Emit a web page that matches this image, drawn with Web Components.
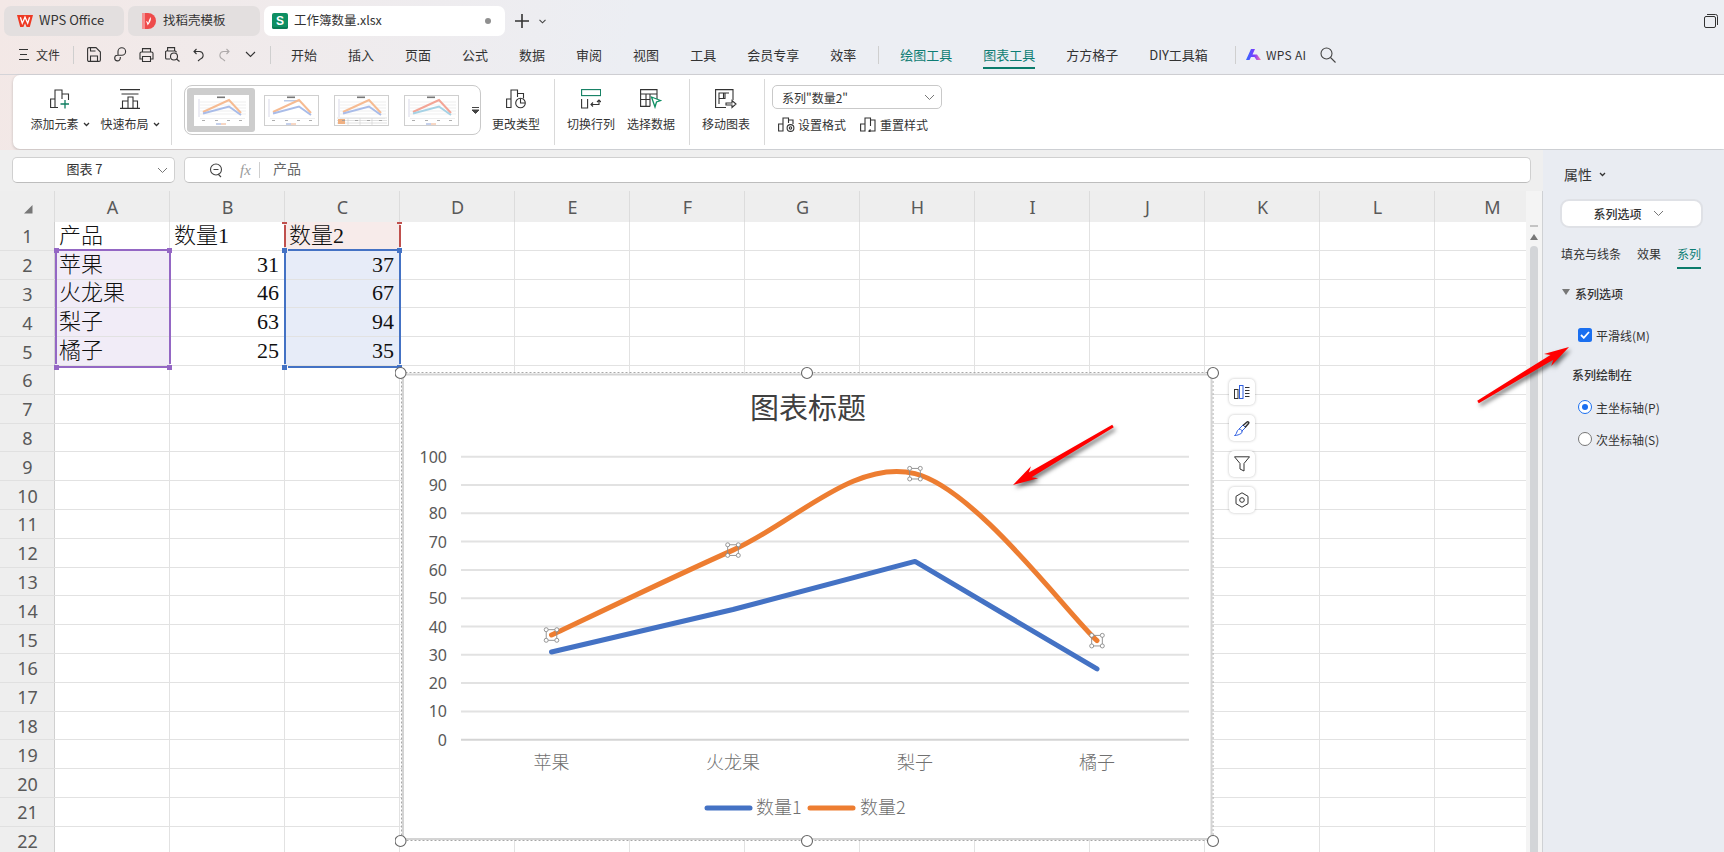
<!DOCTYPE html>
<html lang="zh">
<head>
<meta charset="utf-8">
<title>工作簿数量.xlsx</title>
<style>
html, body { margin: 0; padding: 0; }
body {
    width: 1724px; height: 852px; overflow: hidden; position: relative;
    font-family: "Noto Sans CJK SC", "Noto Sans", sans-serif; color: #333;
    background: linear-gradient(100deg, #f3e8e6 0, #eceef3 34%);
}
#main { display: flex; height: 702px; }
#left { width: 1543px; display: flex; flex-direction: column; background: #efefef; }
svg { display: block; }
</style>
</head>
<body>
<title-bar></title-bar>
<menu-bar></menu-bar>
<chart-ribbon></chart-ribbon>
<div id="main">
    <div id="left">
        <formula-bar></formula-bar>
        <sheet-view>
            <chart-box></chart-box>
        </sheet-view>
    </div>
    <props-panel></props-panel>
</div>
<red-arrow x1="1113" y1="426" x2="1013" y2="485"></red-arrow>
<red-arrow x1="1478" y1="402" x2="1569" y2="347"></red-arrow>

<script>
const open = (el, html) => { el.attachShadow({ mode: "open" }).innerHTML = html; };

const ICON = (w, h, body) => `<svg width="${w}" height="${h}" viewBox="0 0 ${w} ${h}" fill="none" stroke="#333" stroke-width="1.1">${body}</svg>`;
const CARET = `<svg width="7" height="5" viewBox="0 0 7 5" fill="none" stroke="#333" stroke-width="1.3"><path d="M1 1l2.5 2.5L6 1"/></svg>`;
const CHEV = `<svg width="11" height="7" viewBox="0 0 11 7" fill="none" stroke="#777" stroke-width="1"><path d="M1 1l4.5 4.5L10 1"/></svg>`;

class TitleBar extends HTMLElement {
    connectedCallback() {
        open(this, `
        <style>
            :host { display: flex; align-items: center; height: 40px; box-sizing: border-box; padding: 6px 0 4px 4px; gap: 4px; font-size: 13px; }
            .tab { height: 30px; border-radius: 7px; background: #e3dfdf; display: flex; align-items: center; box-sizing: border-box; }
            .tab span { margin-top: -4px; }
            .t1 { width: 120px; padding-left: 13px; gap: 6px; }
            .t2 { width: 132px; padding-left: 14px; gap: 7px; font-size: 12.5px; }
            .t3 { width: 241px; padding-left: 8px; gap: 6px; background: #fff; position: relative; font-size: 12.5px; }
            .dot { position: absolute; left: 221px; top: 12px; width: 6px; height: 6px; border-radius: 50%; background: #8f8f8f; }
            .s { width: 16px; height: 16px; border-radius: 2px; background: #0e8f63; color: #fff; font: 700 12px/16px "Liberation Sans", sans-serif; text-align: center; box-shadow: inset 0 -2px #0a7a54; }
            .plus { margin-left: 6px; }
            .more { margin-left: 6px; }
            .win { margin-left: auto; margin-right: 6px; }
        </style>
        <div class="tab t1">
            <svg width="16" height="12" viewBox="0 0 16 12"><path fill="#ee3a24" d="M0 0h16l-3.200 12H9.600L8 8.200 6.400 12H3.200z"/><path fill="none" stroke="#fff" stroke-width="1.300" d="M3.400 2.200l1.900 6 2.700-6 2.700 6 1.900-6"/></svg>
            <span>WPS Office</span>
        </div>
        <div class="tab t2">
            <svg width="14" height="16" viewBox="0 0 14 16"><path fill="#ee4b4b" d="M0 0h6a8 8 0 0 1 0 16H0z"/><path fill="#f58f8f" d="M0 0h3v16H0z"/><path fill="#fff" d="M8.500 4c.8 2 .3 5-3 8.500 0-2-1.300-3.300-1.300-4.500 1 .2 1.500 1 2 2 .4-2 1.200-4 2.300-6z"/></svg>
            <span>找稻壳模板</span>
        </div>
        <div class="tab t3">
            <div class="s">S</div>
            <span>工作簿数量.xlsx</span>
            <div class="dot"></div>
        </div>
        <svg class="plus" width="14" height="14" viewBox="0 0 14 14" stroke="#333" stroke-width="1.600"><path d="M7 0v14M0 7h14"/></svg>
        <svg class="more" width="7" height="5" viewBox="0 0 7 5" fill="none" stroke="#444" stroke-width="1.100"><path d="M.5 .8l3 3 3-3"/></svg>
        <svg class="win" width="14" height="14" viewBox="0 0 14 14" fill="none" stroke="#333" stroke-width="1"><rect x=".5" y="2.500" width="11" height="11" rx="1.500"/><path d="M3 .5h8.500a2 2 0 0 1 2 2V11"/></svg>`);
    }
}

class MenuBar extends HTMLElement {
    connectedCallback() {
        const tabs = ["开始", "插入", "页面", "公式", "数据", "审阅", "视图", "工具", "会员专享", "效率"];
        open(this, `
        <style>
            :host { display: flex; align-items: center; box-sizing: border-box; padding: 0 0 5px 19px; font-size: 13px; color: #333; border-bottom: 1px solid #d4d4d8; height: 35px; }
            .file { font-size: 12px; margin-left: 7px; }
            .v { width: 1px; height: 18px; background: #cfcfcf; }
            .q { display: flex; align-items: center; width: 26px; justify-content: center; }
            .tabs { display: flex; gap: 31px; }
            .teal { color: #0e7d74; }
            .on { color: #0e7d74; position: relative; }
            .on::after { content: ""; position: absolute; left: 0; right: 0; bottom: -5px; height: 2px; background: #0b7b6b; }
            .ai { font-size: 12px; margin-left: 5px; letter-spacing: .3px; }
        </style>
        <svg width="10" height="11" viewBox="0 0 10 11" stroke="#333" stroke-width="1.100"><path d="M0 .5h9M1 5.500h7M0 10.500h10"/></svg>
        <span class="file">文件</span>
        <div class="v" style="margin:0 7px 0 13px"></div>
        <div class="q">${ICON(14, 15, `<path d="M.6 2a1.400 1.400 0 0 1 1.400-1.400h7l4.400 4.400v8a1.400 1.400 0 0 1-1.400 1.400H2A1.400 1.400 0 0 1 .6 13zM3.500 14.400V9h7v5.400M3.500 .6V4h5"/>`)}</div>
        <div class="q">${ICON(13, 15, `<path d="M4 8V4.500a3.800 3.800 0 1 1 3.800 3.800H3.500a2.800 2.800 0 1 0 2.800 2.800V10"/>`)}</div>
        <div class="q">${ICON(15, 14, `<path d="M3.500 4V.6h8V4M3.500 11H1V5.500A1.500 1.500 0 0 1 2.500 4h10A1.500 1.500 0 0 1 14 5.500V11h-2.500M3.500 8.500h8v5h-8z"/>`)}</div>
        <div class="q">${ICON(15, 15, `<path d="M5 12H1.600A1 1 0 0 1 .6 11V4.500l2-1V.6h7v3l1.500 1v1M2.500 4h7"/><circle cx="9" cy="9.500" r="3.500"/><path d="M11.500 12l3 2.500"/>`)}</div>
        <div class="q">${ICON(11, 14, `<path d="M3.500 1L1 3.500 3.500 6M1 3.500h5.500a3.800 3.800 0 0 1 1 7.400L5 13"/>`)}</div>
        <div class="q" style="opacity:.35">${ICON(11, 14, `<path d="M7.500 1L10 3.500 7.500 6M10 3.500H4.500a3.800 3.800 0 0 0-1 7.400L6 13"/>`)}</div>
        <div class="q">${ICON(11, 7, `<path d="M1 1l4.500 4.500L10 1"/>`)}</div>
        <div class="v" style="margin:0 20px 0 7px"></div>
        <div class="tabs">${tabs.map(t => `<span>${t}</span>`).join("")}</div>
        <div class="v" style="margin:0 21px 0 22px"></div>
        <div class="tabs">
            <span class="teal">绘图工具</span>
            <span class="on">图表工具</span>
            <span>方方格子</span>
            <span>DIY工具箱</span>
        </div>
        <div class="v" style="margin:0 10px 0 27px"></div>
        <svg width="15" height="11" viewBox="0 0 15 11"><defs><linearGradient id="g" x1="0" x2="1"><stop offset="0" stop-color="#2f6bff"/><stop offset=".55" stop-color="#7a3cff"/><stop offset="1" stop-color="#ff7aa8"/></linearGradient></defs><path fill="url(#g)" d="M0 11L5 0h4L6.500 5.500H11L15 11h-4.500L8.500 8H5L3.500 11z"/></svg>
        <span class="ai">WPS AI</span>
        <svg style="margin-left:14px" width="16" height="16" viewBox="0 0 16 16" fill="none" stroke="#444" stroke-width="1.100"><circle cx="6.500" cy="6.500" r="5.500"/><path d="M10.500 10.500L15.500 15.500"/></svg>`);
    }
}

class RibbonBtn extends HTMLElement {
    connectedCallback() {
        const caret = this.hasAttribute("caret") ? CARET : "";
        open(this, `
        <style>
            :host { display: flex; flex-direction: column; align-items: center; box-sizing: border-box; padding-top: 14px; font-size: 12px; color: #333; }
            .ic { height: 20px; display: flex; justify-content: center; }
            .lb { height: 18px; line-height: 18px; margin-top: 6px; display: flex; align-items: center; gap: 4px; white-space: nowrap; }
        </style>
        <div class="ic"><slot></slot></div>
        <div class="lb">${this.getAttribute("label")}${caret}</div>`);
    }
}

// little preview of a chart style in the gallery
function thumb(kind) {
    const extra = {
        0: ``,
        1: `<rect x="20" y="5" width="15" height="1.500" fill="#9db3dd" opacity=".7"/>`,
        2: `<path d="M3 23h50M3 25.500h50M3 28h50M14 23v7M26 23v7M38 23v7" stroke="#ccc" stroke-width=".6"/><rect x="4" y="24" width="7" height="5" fill="#f0b183"/>`,
        3: ``
    }[kind];
    const o = kind === 3 ? "#f3a596" : "#f6bb92";
    const b = kind === 3 ? "#a6d2e5" : "#a9bce8";
    const lines = kind === 1 ? "" : `<path d="M6 7h46M6 10h46M6 13h46M6 16h46M6 19h46" stroke="#e8e8e8" stroke-width=".7"/>`;
    return `<svg width="55" height="31" viewBox="0 0 55 31" style="background:#fff;outline:1px solid ${kind ? "#cfcfcf" : "#fff"};outline-offset:-1px">
        <rect x="23" y="1.500" width="8" height="1.600" fill="#777"/>
        ${lines}${extra}
        <path d="M5 4v18" stroke="#c9c9e0" stroke-width=".7"/>
        <path d="M9 17L35 5 47 18" fill="none" stroke="${o}" stroke-width="2"/>
        <path d="M9 18.500L35 11.500 47 20" fill="none" stroke="${b}" stroke-width="2"/>
        <path d="M6 23.500h45" stroke="#ddd" stroke-width=".5"/>
        <path d="M8 25.500h3M21 25.500h3M33 25.500h3M45 25.500h3" stroke="#999" stroke-width=".8"/>
        ${kind === 2 ? "" : `<path d="M22 29h5" stroke="#6d8bd0" stroke-width=".8"/><path d="M27 29h5" stroke="#ea9a6a" stroke-width=".8"/>`}
    </svg>`;
}

class ChartRibbon extends HTMLElement {
    connectedCallback() {
        open(this, `
        <style>
            :host { display: flex; height: 74px; margin-left: 13px; padding-left: 17px; background: #fff; border-radius: 7px 0 0 7px; box-shadow: 0 1px 3px rgba(0,0,0,.2); margin-bottom: 1px; font-size: 12px; }
            .sep { width: 1px; height: 66px; background: #d9d9d9; margin: 4px 12px 0 14px; flex: none; }
            rb-btn { margin-right: 12px; }
            .gal { width: 297px; height: 50px; box-sizing: border-box; margin: 10px 11px 0 0; border: 1px solid #c9c9c9; border-radius: 8px; display: flex; gap: 2px; padding: 2px; position: relative; }
            .cell { width: 68px; height: 44px; border-radius: 3px; display: flex; align-items: center; justify-content: center; flex: none; }
            .cell.sel { background: #cdcdcd; }
            .drop { position: absolute; left: 287px; top: 20px; }
            .sel-box { display: flex; flex-direction: column; margin-left: -5px; }
            .series { width: 170px; height: 24px; box-sizing: border-box; margin-top: 10px; border: 1px solid #c9c9c9; border-radius: 5px; display: flex; align-items: center; justify-content: space-between; padding: 0 6px 0 9px; }
            .acts { display: flex; margin-top: 6px; height: 18px; align-items: center; padding-left: 6px; gap: 3px; }
            .acts span { margin-right: 11px; }
        </style>
        <rb-btn label="添加元素" caret style="width:60px;margin-right:10px">${ICON(20, 20, `<path d="M8 18.500H.6V10H5M5 18.500V1h7v9M12 5h6.500v6"/><path stroke="#0e7d60" stroke-width="1.300" d="M10.500 15H19M15 11v8.500"/>`)}</rb-btn>
        <rb-btn label="快速布局" caret style="width:60px;margin-right:0">${ICON(20, 20, `<path d="M0 .6h20M1.500 5h17M0 19.400h20M2.500 19V12H8v7M8 19V8h5v11M13 12h4.500v7"/>`)}</rb-btn>
        <div class="sep" style="margin-left:11px"></div>
        <div class="gal">
            <div class="cell sel">${thumb(0)}</div>
            <div class="cell">${thumb(1)}</div>
            <div class="cell">${thumb(2)}</div>
            <div class="cell">${thumb(3)}</div>
            <svg class="drop" width="7" height="8" viewBox="0 0 7 8" stroke="#444"><path d="M0 1.500h7"/><path d="M0 4h7L3.500 7.500z" fill="#444"/></svg>
        </div>
        <rb-btn label="更改类型" style="width:48px;margin-right:0">${ICON(20, 20, `<path d="M5 18.500H.6V10H5zM5 10V1h6.500v7M11.500 4.500h6v5"/><circle cx="14.500" cy="14" r="4.800"/><path d="M14.500 9.500V14h4.500"/>`)}</rb-btn>
        <div class="sep"></div>
        <rb-btn label="切换行列" style="width:48px">${ICON(20, 20, `<rect x=".6" y=".6" width="19" height="6" stroke="#0e7d60"/><path d="M.6 10v9h6v-9M10 15.500h8v-4M16 13l2-2 2 2M12 13.500l-2 2 2 2"/>`)}</rb-btn>
        <rb-btn label="选择数据" style="width:48px;margin-right:0">${ICON(22, 20, `<path d="M17 10V.6H.6v16.800H10M.6 5h16.400M.6 10.500H10M6 5v12.400M10 5v12.400"/><path stroke="#0e8f63" stroke-width="1.300" d="M11.500 8l9 3.500-4 1.500-1.500 5z"/>`)}</rb-btn>
        <div class="sep"></div>
        <rb-btn label="移动图表" style="width:48px;margin-right:0">${ICON(22, 20, `<path d="M11 18.500H.6V.6H18V11M4 15V4h10M4 9.500h6V4M8.500 4v5.500"/><path d="M11 14h6v-2.500l4 3.500-4 3.500V16h-6z"/>`)}</rb-btn>
        <div class="sep"></div>
        <div class="sel-box">
            <div class="series"><span>系列"数量2"</span>${CHEV}</div>
            <div class="acts">
                ${ICON(17, 15, `<path d="M5 14H.6V7H5zM5 7V1h5.500v5M10.500 3H15v4"/><circle cx="12.500" cy="11" r="3.400"/><circle cx="12.500" cy="11" r="1.200"/>`)}
                <span>设置格式</span>
                ${ICON(17, 15, `<path d="M5 14H.6V7H5zM5 7V1h5.500v8M10.500 3H15v11h-2"/><path d="M13 14h-4l1.500-1.500M9 14l1.500 1.500"/>`)}
                <span>重置样式</span>
            </div>
        </div>`);
    }
}

class FormulaBar extends HTMLElement {
    connectedCallback() {
        open(this, `
        <style>
            :host { display: flex; height: 41px; box-sizing: border-box; padding: 7px 0 8px 12px; gap: 9px; font-size: 13px; color: #333; flex: none; }
            .box { background: #fff; border: 1px solid #d0d0d0; border-bottom-color: #bdbdbd; border-radius: 5px; box-sizing: border-box; height: 26px; display: flex; align-items: center; }
            .box span { margin-top: -4px; }
            .name { width: 163px; position: relative; justify-content: center; padding-right: 18px; }
            .name svg { position: absolute; right: 6px; top: 9px; }
            .f { width: 1347px; }
            .fx { font: italic 15px "Liberation Serif", serif; color: #9a9a9a; margin-left: 17px; width: 14px; }
            .box .fx { margin-top: 0; }
            .v { width: 1px; height: 16px; background: #cfcfcf; margin: 0 7px 0 5px; }
            .val { font-size: 14px; color: #666; margin-left: 6px; }
        </style>
        <div class="box name"><span>图表 7</span>${CHEV}</div>
        <div class="box f">
            <svg style="margin-left:24px" width="14" height="15" viewBox="0 0 14 15" fill="none" stroke="#444" stroke-width="1.100"><circle cx="7" cy="6.500" r="5.500"/><path d="M4.500 6.500h5M9 11l3 3"/></svg>
            <span class="fx">fx</span>
            <div class="v"></div>
            <span class="val">产品</span>
        </div>`);
    }
}

const CELLS = {
    "0,1": "产品", "1,1": "数量1", "2,1": "数量2",
    "0,2": "苹果", "1,2": "31", "2,2": "37",
    "0,3": "火龙果", "1,3": "46", "2,3": "67",
    "0,4": "梨子", "1,4": "63", "2,4": "94",
    "0,5": "橘子", "1,5": "25", "2,5": "35"
};

class SheetView extends HTMLElement {
    connectedCallback() {
        const letters = "ABCDEFGHIJKLM".split("");
        let cells = `<div class="hd corner"><svg width="10" height="10" viewBox="0 0 10 10"><path d="M9.500 1v8.500H1z" fill="#777"/></svg></div>`;
        cells += letters.map(l => `<div class="hd">${l}</div>`).join("");
        for (let r = 1; r <= 22; r++) {
            cells += `<div class="hd rn">${r}</div>`;
            for (let c = 0; c < 13; c++) {
                const v = CELLS[c + "," + r] || "";
                let cls = "c";
                if (c > 0 && r > 1) cls += " num";
                if (c === 0 && r >= 2 && r <= 5) cls += " purple";
                if (c === 2 && r >= 2 && r <= 5) cls += " blue";
                if (c === 2 && r === 1) cls += " red";
                cells += `<div class="${cls}">${v}</div>`;
            }
        }
        // range marks, in coordinates of the grid
        const range = (x1, y1, x2, y2, col) => {
            const h = (x, y) => `<i style="left:${x - 2.5}px;top:${y - 2.5}px;width:5px;height:5px;background:${col}"></i>`;
            const line = (x, y, w, hh) => `<i style="left:${x}px;top:${y}px;width:${w}px;height:${hh}px;background:${col}"></i>`;
            return line(x1 + 3, y1 - 1, x2 - x1 - 6, 2) + line(x1 + 3, y2 - 1, x2 - x1 - 6, 2)
                + line(x1 - 1, y1 + 3, 2, y2 - y1 - 6) + line(x2 - 1, y1 + 3, 2, y2 - y1 - 6)
                + h(x1, y1) + h(x2, y1) + h(x1, y2) + h(x2, y2);
        };
        const marks = range(56, 59, 169.500, 176, "#9467c4") + range(284.500, 59, 399.500, 176, "#4472c4")
            + `<i style="left:282px;top:31px;width:5px;height:2px;background:#c0504d"></i><i style="left:397px;top:31px;width:5px;height:2px;background:#c0504d"></i>`
            + `<i style="left:283.500px;top:34px;width:2px;height:22px;background:#c0504d"></i><i style="left:398.500px;top:34px;width:2px;height:22px;background:#c0504d"></i>`;
        open(this, `
        <style>
            :host { display: flex; flex: 1; min-height: 0; border-right: 1px solid #cfd1d4; position: relative; overflow: hidden; }
            .area { width: 1526px; flex: none; overflow: hidden; position: relative; background: #fff; }
            .grid { display: grid; grid-template-columns: 55px repeat(13, 115px); grid-template-rows: 31px repeat(22, 28.800px); width: 1550px; }
            .hd { background: #eeeeee; display: flex; align-items: center; justify-content: center; font: 18px "Noto Sans", sans-serif; color: #595959; box-shadow: inset -1px 0 #dcdcdc; }
            .rn { box-shadow: inset 0 -1px #e0e0e0, inset -1px 0 #d0d0d0; }
            .corner { justify-content: flex-end; padding: 4px 22px 0 0; }
            .c { box-sizing: border-box; border-right: 1px solid #e2e2e2; border-bottom: 1px solid #e2e2e2; padding: 0 4px; overflow: hidden; white-space: nowrap;
                 font: 300 22px/28px "Liberation Serif", "Noto Sans CJK SC", serif; color: #111; display: flex; align-items: flex-end; }
            .num { justify-content: flex-end; padding-right: 5px; }
            .purple { background: #f1ecf7; }
            .blue { background: #e7ecf8; }
            .red { background: #f7ebea; }
            .marks i { position: absolute; display: block; }
            .bar { width: 16px; flex: none; background: #f4f4f4; position: relative; display: flex; flex-direction: column; align-items: center; padding-top: 38px; box-sizing: border-box; }
            .dash { width: 8px; height: 2px; background: #c4c4c4; margin-bottom: 7px; margin-top: -4px; }
            .tri { width: 0; height: 0; border: 4px solid transparent; border-top: 0; border-bottom: 6px solid #777; margin-bottom: 6px; }
            .thumb { width: 8px; flex: 1; background: #d3d5d8; border-radius: 4px 4px 0 0; }
        </style>
        <div class="area">
            <div class="grid">${cells}</div>
            <div class="marks">${marks}</div>
            <slot></slot>
        </div>
        <div class="bar"><div class="dash"></div><div class="tri"></div><div class="thumb"></div></div>`);
    }
}

// catmull-rom through the points, how the sheet smooths a series
function smoothPath(p) {
    let d = `M${p[0][0]} ${p[0][1]}`;
    for (let i = 0; i < p.length - 1; i++) {
        const a = p[Math.max(i - 1, 0)], b = p[i], c = p[i + 1], e = p[Math.min(i + 2, p.length - 1)];
        const c1 = [b[0] + (c[0] - a[0]) / 6, b[1] + (c[1] - a[1]) / 6];
        const c2 = [c[0] - (e[0] - b[0]) / 6, c[1] - (e[1] - b[1]) / 6];
        d += `C${c1[0]} ${c1[1]} ${c2[0]} ${c2[1]} ${c[0]} ${c[1]}`;
    }
    return d;
}

class ChartBox extends HTMLElement {
    connectedCallback() {
        const Y = v => 739.700 - 2.830 * v;
        const X = [551.500, 733, 915, 1097];
        const s1 = [31, 46, 63, 25].map((v, i) => [X[i], Y(v)]);
        const s2 = [37, 67, 94, 35].map((v, i) => [X[i], Y(v)]);
        let grid = "", axis = "";
        for (let v = 0; v <= 100; v += 10) {
            grid += `<path d="M461 ${Y(v)}H1189" stroke="${v ? "#e2e2e2" : "#d4d4d4"}" stroke-width="2"/>`;
            axis += `<text x="447" y="${Y(v) + 6}" text-anchor="end" class="ax">${v}</text>`;
        }
        const cats = ["苹果", "火龙果", "梨子", "橘子"].map((t, i) => `<text x="${X[i]}" y="769" text-anchor="middle" class="cat">${t}</text>`).join("");
        const pts = s2.map(([x, y]) => {
            const k = 5.300;
            return `<g fill="#fff" stroke="#8a8a8a" stroke-width=".9"><rect x="${x - k}" y="${y - k}" width="${2 * k}" height="${2 * k}" fill="none"/>`
                + [[-k, -k], [k, -k], [-k, k], [k, k]].map(([a, b]) => `<circle cx="${x + a}" cy="${y + b}" r="2"/>`).join("") + `</g>`;
        }).join("");
        const handles = [400.500, 807, 1213].flatMap(x => [373, 841].map(y => `<circle cx="${x}" cy="${y}" r="5.500" fill="#fff" stroke="#666" stroke-width="1.100"/>`)).join("");
        open(this, `
        <style>
            :host { position: absolute; left: 395px; top: 175px; width: 880px; height: 486px; display: block; }
            svg.c { position: absolute; left: 0; top: 0; }
            text { font-family: "Noto Sans CJK SC", "Noto Sans", sans-serif; }
            .ttl { font-size: 29px; fill: #404040; }
            .ax { font-size: 16px; fill: #595959; font-family: "Noto Sans", sans-serif; }
            .cat, .leg { font-size: 18px; font-weight: 300; fill: #707070; }
            .tools { position: absolute; left: 834px; top: 13px; display: flex; flex-direction: column; gap: 10px; }
            .b { width: 26px; height: 26px; background: #fff; border-radius: 5px; box-shadow: 0 0 3px rgba(0,0,0,.25); display: flex; align-items: center; justify-content: center; }
        </style>
        <svg class="c" width="880" height="486" viewBox="395 366 880 486">
            <rect x="401.500" y="372.500" width="811.500" height="468" fill="none" stroke="#a8a8a8" stroke-dasharray="2 2"/>
            <rect x="403" y="374.500" width="808.500" height="464.500" fill="#fff" stroke="#d4d4d4" stroke-width="2"/>
            <text x="808" y="419" text-anchor="middle" class="ttl">图表标题</text>
            ${grid}${axis}${cats}
            <path d="${smoothPath(s1).replace(/C.*/, "") + s1.slice(1).map(p => `L${p[0]} ${p[1]}`).join("")}" fill="none" stroke="#4472c4" stroke-width="5" stroke-linecap="round" stroke-linejoin="round"/>
            <path d="${smoothPath(s2)}" fill="none" stroke="#ed7d31" stroke-width="5" stroke-linecap="round"/>
            ${pts}
            <path d="M707 808H750" stroke="#4472c4" stroke-width="5" stroke-linecap="round"/>
            <text x="756" y="814" class="leg">数量1</text>
            <path d="M810 808H853" stroke="#ed7d31" stroke-width="5" stroke-linecap="round"/>
            <text x="860" y="814" class="leg">数量2</text>
            ${handles}
        </svg>
        <div class="tools">
            <div class="b"><svg width="16" height="14" viewBox="0 0 16 14" fill="none" stroke="#333"><rect x=".5" y="4.500" width="3.500" height="9"/><rect x="5.500" y=".5" width="3.500" height="13" stroke="#2f5fe0"/><path d="M11 2.500h4.500M11 5.500h4.500M11 8.500h4.500M11 11.500h4.500"/></svg></div>
            <div class="b"><svg width="16" height="15" viewBox="0 0 16 15" fill="none" stroke="#2f5fe0"><path d="M.5 14.500c2-1 2-3 3-5 1-1.500 3-1.500 4-.5s1 2.500-.5 3.500c-1.500 1-4 2-6.500 2zM5 8l4-4 2.500 2.500-4 4"/><path stroke="#333" stroke-width="1.500" d="M9 4.500l4-3.500c1-.7 2.300.6 1.500 1.500L11 6.500"/></svg></div>
            <div class="b"><svg width="16" height="16" viewBox="0 0 16 16" fill="none" stroke="#333"><path d="M.5 .8h15L10 7.500V15l-4-2V7.500z"/></svg></div>
            <div class="b"><svg width="14" height="16" viewBox="0 0 14 16" fill="none" stroke="#333"><path d="M7 .8l6 3.500v7.400l-6 3.500-6-3.500V4.300z"/><circle cx="7" cy="8" r="2.300"/></svg></div>
        </div>`);
    }
}

class PropsPanel extends HTMLElement {
    connectedCallback() {
        open(this, `
        <style>
            :host { display: flex; flex-direction: column; width: 181px; flex: none; background: #e9ecf2; font-size: 12px; color: #333; }
            .head { margin: 14px 0 0 21px; height: 20px; display: flex; align-items: center; gap: 7px; font-size: 14px; }
            .drop { margin: 15px 0 0 17px; width: 143px; height: 29px; box-sizing: border-box; background: #fff; border: 2px solid #dfe1e6; border-radius: 9px; display: flex; align-items: center; justify-content: center; gap: 11px; font-weight: 500; padding-right: 6px; }
            .tabs { margin: 19px 0 0 18px; height: 22px; display: flex; gap: 16px; }
            .tabs span { height: 22px; line-height: 14px; box-sizing: border-box; }
            .tabs .on { color: #0e7d74; border-bottom: 2px solid #0b7b6b; }
            .sec { margin: 15px 0 0 19px; height: 18px; display: flex; align-items: center; gap: 4px; font-weight: 500; }
            .tri { width: 0; height: 0; border: 4px solid transparent; border-bottom: 0; border-top: 6px solid #777; margin-top: -2px; margin-right: 1px; }
            .row { margin: 14px 0 0 35px; height: 18px; display: flex; align-items: center; gap: 4px; }
            .chk { width: 14px; height: 14px; border-radius: 2.500px; background: #1a6ff0; display: flex; align-items: center; justify-content: center; }
            .sub { margin: 22px 0 0 29px; height: 18px; line-height: 18px; font-weight: 500; }
            .rd { width: 12px; height: 12px; border: 1px solid #777; border-radius: 50%; background: #fff; flex: none; position: relative; }
            .rd.on { border-color: #1a6ff0; }
            .rd.on::after { content: ""; position: absolute; left: 3px; top: 3px; width: 6px; height: 6px; border-radius: 50%; background: #1a6ff0; }
        </style>
        <div class="head"><span>属性</span>${CARET}</div>
        <div class="drop"><span>系列选项</span>${CHEV}</div>
        <div class="tabs"><span>填充与线条</span><span>效果</span><span class="on">系列</span></div>
        <div class="sec"><div class="tri"></div><span>系列选项</span></div>
        <div class="row" style="margin-top:24px">
            <div class="chk"><svg width="10" height="8" viewBox="0 0 10 8" fill="none" stroke="#fff" stroke-width="1.800"><path d="M1 4l2.800 2.800L9 1"/></svg></div>
            <span>平滑线(M)</span>
        </div>
        <div class="sub">系列绘制在</div>
        <div class="row"><div class="rd on"></div><span>主坐标轴(P)</span></div>
        <div class="row"><div class="rd"></div><span>次坐标轴(S)</span></div>`);
    }
}

// annotation arrow drawn over the page
class RedArrow extends HTMLElement {
    connectedCallback() {
        const [x1, y1, x2, y2] = ["x1", "y1", "x2", "y2"].map(a => +this.getAttribute(a));
        const L = Math.hypot(x2 - x1, y2 - y1), ux = (x2 - x1) / L, uy = (y2 - y1) / L, nx = -uy, ny = ux;
        const at = (s, w) => `${x1 + ux * s + nx * w},${y1 + uy * s + ny * w}`;
        const pts = [at(0, 1.500), at(L - 20, 2.800), at(L - 25, 7), at(L, 0), at(L - 25, -7), at(L - 20, -2.800), at(0, -1.500)].join(" ");
        open(this, `
        <style>
            :host { position: absolute; left: 0; top: 0; width: 1724px; height: 852px; display: block; pointer-events: none; }
        </style>
        <svg width="1724" height="852" style="filter:drop-shadow(2px 3px 2px rgba(0,0,0,.55))"><polygon points="${pts}" fill="#f00"/></svg>`);
    }
}

customElements.define("title-bar", TitleBar);
customElements.define("menu-bar", MenuBar);
customElements.define("rb-btn", RibbonBtn);
customElements.define("chart-ribbon", ChartRibbon);
customElements.define("formula-bar", FormulaBar);
customElements.define("sheet-view", SheetView);
customElements.define("chart-box", ChartBox);
customElements.define("props-panel", PropsPanel);
customElements.define("red-arrow", RedArrow);
</script>
</body>
</html>
